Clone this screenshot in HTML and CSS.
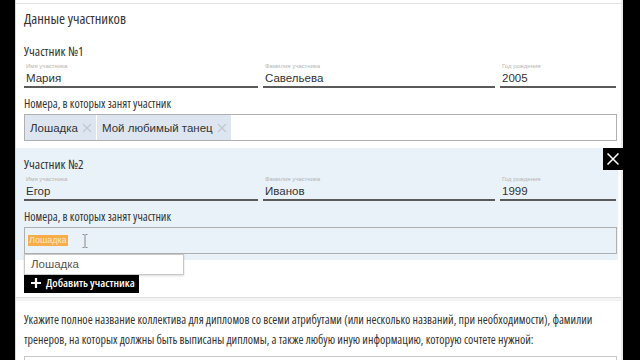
FILE: index.html
```html
<!DOCTYPE html>
<html lang="ru">
<head>
<meta charset="utf-8">
<link rel="stylesheet" href="styles.css">
</head>
<body>
<div class="panel">
  <div class="topline"></div>
  <h2 class="heading">Данные участников</h2>

  <div class="participant">
    <div class="p-title">Участник №1</div>
    <div class="fields">
      <div class="field f-name"><div class="f-label">Имя участника</div><div class="f-value">Мария</div></div>
      <div class="field f-surname"><div class="f-label">Фамилия участника</div><div class="f-value">Савельева</div></div>
      <div class="field f-year"><div class="f-label">Год рождения</div><div class="f-value">2005</div></div>
    </div>
    <div class="n-label">Номера, в которых занят участник</div>
    <div class="tagbox">
      <span class="tag">Лошадка<svg class="tag-x" viewBox="0 0 10 10"><path d="M1 1L9 9M9 1L1 9"/></svg></span>
      <span class="tag">Мой любимый танец<svg class="tag-x" viewBox="0 0 10 10"><path d="M1 1L9 9M9 1L1 9"/></svg></span>
    </div>
  </div>

  <div class="participant active">
    <button class="close" aria-label="Удалить"><svg viewBox="0 0 12 12"><path d="M0.5 0.5L11.5 11.5M11.5 0.5L0.5 11.5"/></svg></button>
    <div class="p-title">Участник №2</div>
    <div class="fields">
      <div class="field f-name"><div class="f-label">Имя участника</div><div class="f-value">Егор</div></div>
      <div class="field f-surname"><div class="f-label">Фамилия участника</div><div class="f-value">Иванов</div></div>
      <div class="field f-year"><div class="f-label">Год рождения</div><div class="f-value">1999</div></div>
    </div>
    <div class="n-label">Номера, в которых занят участник</div>
    <div class="tagbox input-box">
      <span class="selected">Лошадка</span>
      <svg class="ibeam" viewBox="0 0 6 14"><path d="M0.5 0.5H2.5M3.5 0.5H5.5M3 1V13M0.5 13.5H2.5M3.5 13.5H5.5"/></svg>
    </div>
    <div class="dropdown">Лошадка</div>
  </div>

  <div class="add-row">
    <button class="add-btn"><svg class="plus" viewBox="0 0 10 10"><path d="M5 0V10M0 5H10"/></svg>Добавить участника</button>
  </div>

  <div class="info">
    <p class="info-text">Укажите полное название коллектива для дипломов со всеми атрибутами (или несколько названий, при необходимости), фамилии тренеров, на которых должны быть выписаны дипломы, а также любую иную информацию, которую сочтете нужной:</p>
    <div class="textarea"></div>
  </div>
</div>
</body>
</html>
```
FILE: styles.css
```css
html, body {
  margin: 0;
  padding: 0;
  background: #000;
  height: 360px;
  overflow: hidden;
}
.panel {
  margin-left: 15px;
  width: 605px;
  height: 360px;
  background: #fff;
  border-left: 1px solid #d8d8d8;
  border-right: 2px solid #eaeaea;
  font-family: "Open Sans", "Liberation Sans", sans-serif;
  font-stretch: 75%;
  color: #333;
}
.topline {
  height: 3px;
  border-bottom: 1px solid #e2e2e2;
}
.heading {
  margin: 6px 0 0 8px;
  font-weight: normal;
  font-size: 14.5px;
  font-stretch: 85%;
  line-height: 18px;
  color: #333;
}
.participant {
  position: relative;
  margin-top: 7px;
  height: 112px;
  box-sizing: border-box;
  padding: 9px 1px 0 8px;
  width: 602px;
}
.participant.active {
  background: #e9f1f9;
  margin-top: 1px;
}
.p-title {
  font-size: 13px;
  line-height: 14px;
}
.fields {
  display: flex;
  gap: 5px;
  margin-top: 4px;
}
.field {
  border-bottom: 2px solid #5a5a5a;
}
.f-name { width: 234px; }
.f-surname { width: 232px; }
.f-year { width: 116px; }
.f-label {
  font-family: "Liberation Sans", sans-serif;
  font-size: 6px;
  line-height: 8px;
  color: #b5b5b5;
  padding-left: 2px;
}
.f-value {
  font-family: "Liberation Sans", sans-serif;
  font-size: 11.5px;
  line-height: 16px;
  color: #333;
  padding-left: 2px;
}
.n-label {
  margin-top: 9px;
  font-size: 12px;
  line-height: 14px;
}
.tagbox {
  margin-top: 3px;
  height: 27px;
  box-sizing: border-box;
  border: 1px solid #b0b0b0;
  background: #fff;
  width: 593px;
  display: flex;
  align-items: stretch;
  gap: 1px;
}
.input-box {
  background: #e9f1f9;
  align-items: center;
  padding-left: 3px;
}
.tag {
  background: #dde6f0;
  display: flex;
  align-items: center;
  padding: 0 4px 0 5px;
  font-family: "Liberation Sans", sans-serif;
  font-size: 11.5px;
  color: #333;
}
.tag-x {
  width: 10px;
  height: 10px;
  margin-left: 4px;
  stroke: #c2c8d0;
  stroke-width: 1.2;
  fill: none;
}
.selected {
  background: #f6ad4a;
  color: #fde7c6;
  font-family: "Liberation Sans", sans-serif;
  font-size: 9px;
  line-height: 11px;
  padding: 0 1px;
}
.ibeam {
  width: 6px;
  height: 14px;
  margin-left: 13px;
  stroke: #888;
  stroke-width: 1;
  fill: none;
}
.close {
  position: absolute;
  top: 0;
  right: -5px;
  width: 20px;
  height: 22px;
  background: #000;
  border: 0;
  padding: 0;
  display: flex;
  align-items: center;
  justify-content: center;
}
.close svg {
  width: 12px;
  height: 12px;
  stroke: #fff;
  stroke-width: 1.5;
  fill: none;
}
.dropdown {
  position: absolute;
  left: 8px;
  top: 106px;
  width: 160px;
  height: 21px;
  box-sizing: border-box;
  background: #fff;
  border: 1px solid #c8c8c8;
  box-shadow: 0 1px 2px rgba(0,0,0,0.15);
  font-family: "Liberation Sans", sans-serif;
  font-size: 11.5px;
  line-height: 19px;
  color: #555;
  padding-left: 6px;
  z-index: 2;
}
.add-row {
  padding: 12px 0 0 8px;
  height: 38px;
  box-sizing: border-box;
  border-bottom: 1px solid #e0e0e0;
}
.add-btn {
  height: 21px;
  width: 115px;
  background: #000;
  color: #fff;
  border: 0;
  padding: 0 0 0 7px;
  display: flex;
  align-items: center;
  font-family: "Open Sans", "Liberation Sans", sans-serif;
  font-stretch: 75%;
  font-weight: 600;
  font-size: 11.5px;
  white-space: nowrap;
}
.plus {
  width: 10px;
  height: 10px;
  stroke: #fff;
  stroke-width: 2.2;
  margin-right: 5px;
  flex: none;
}
.info {
  border-top: 3px solid #f3f3f3;
  padding: 9px 0 0 8px;
}
.info-text {
  margin: 0;
  font-size: 12px;
  line-height: 20px;
  color: #333;
  width: 592px;
}
.textarea {
  margin-top: 6px;
  width: 591px;
  height: 40px;
  border: 1px solid #c8c8c8;
}
```
